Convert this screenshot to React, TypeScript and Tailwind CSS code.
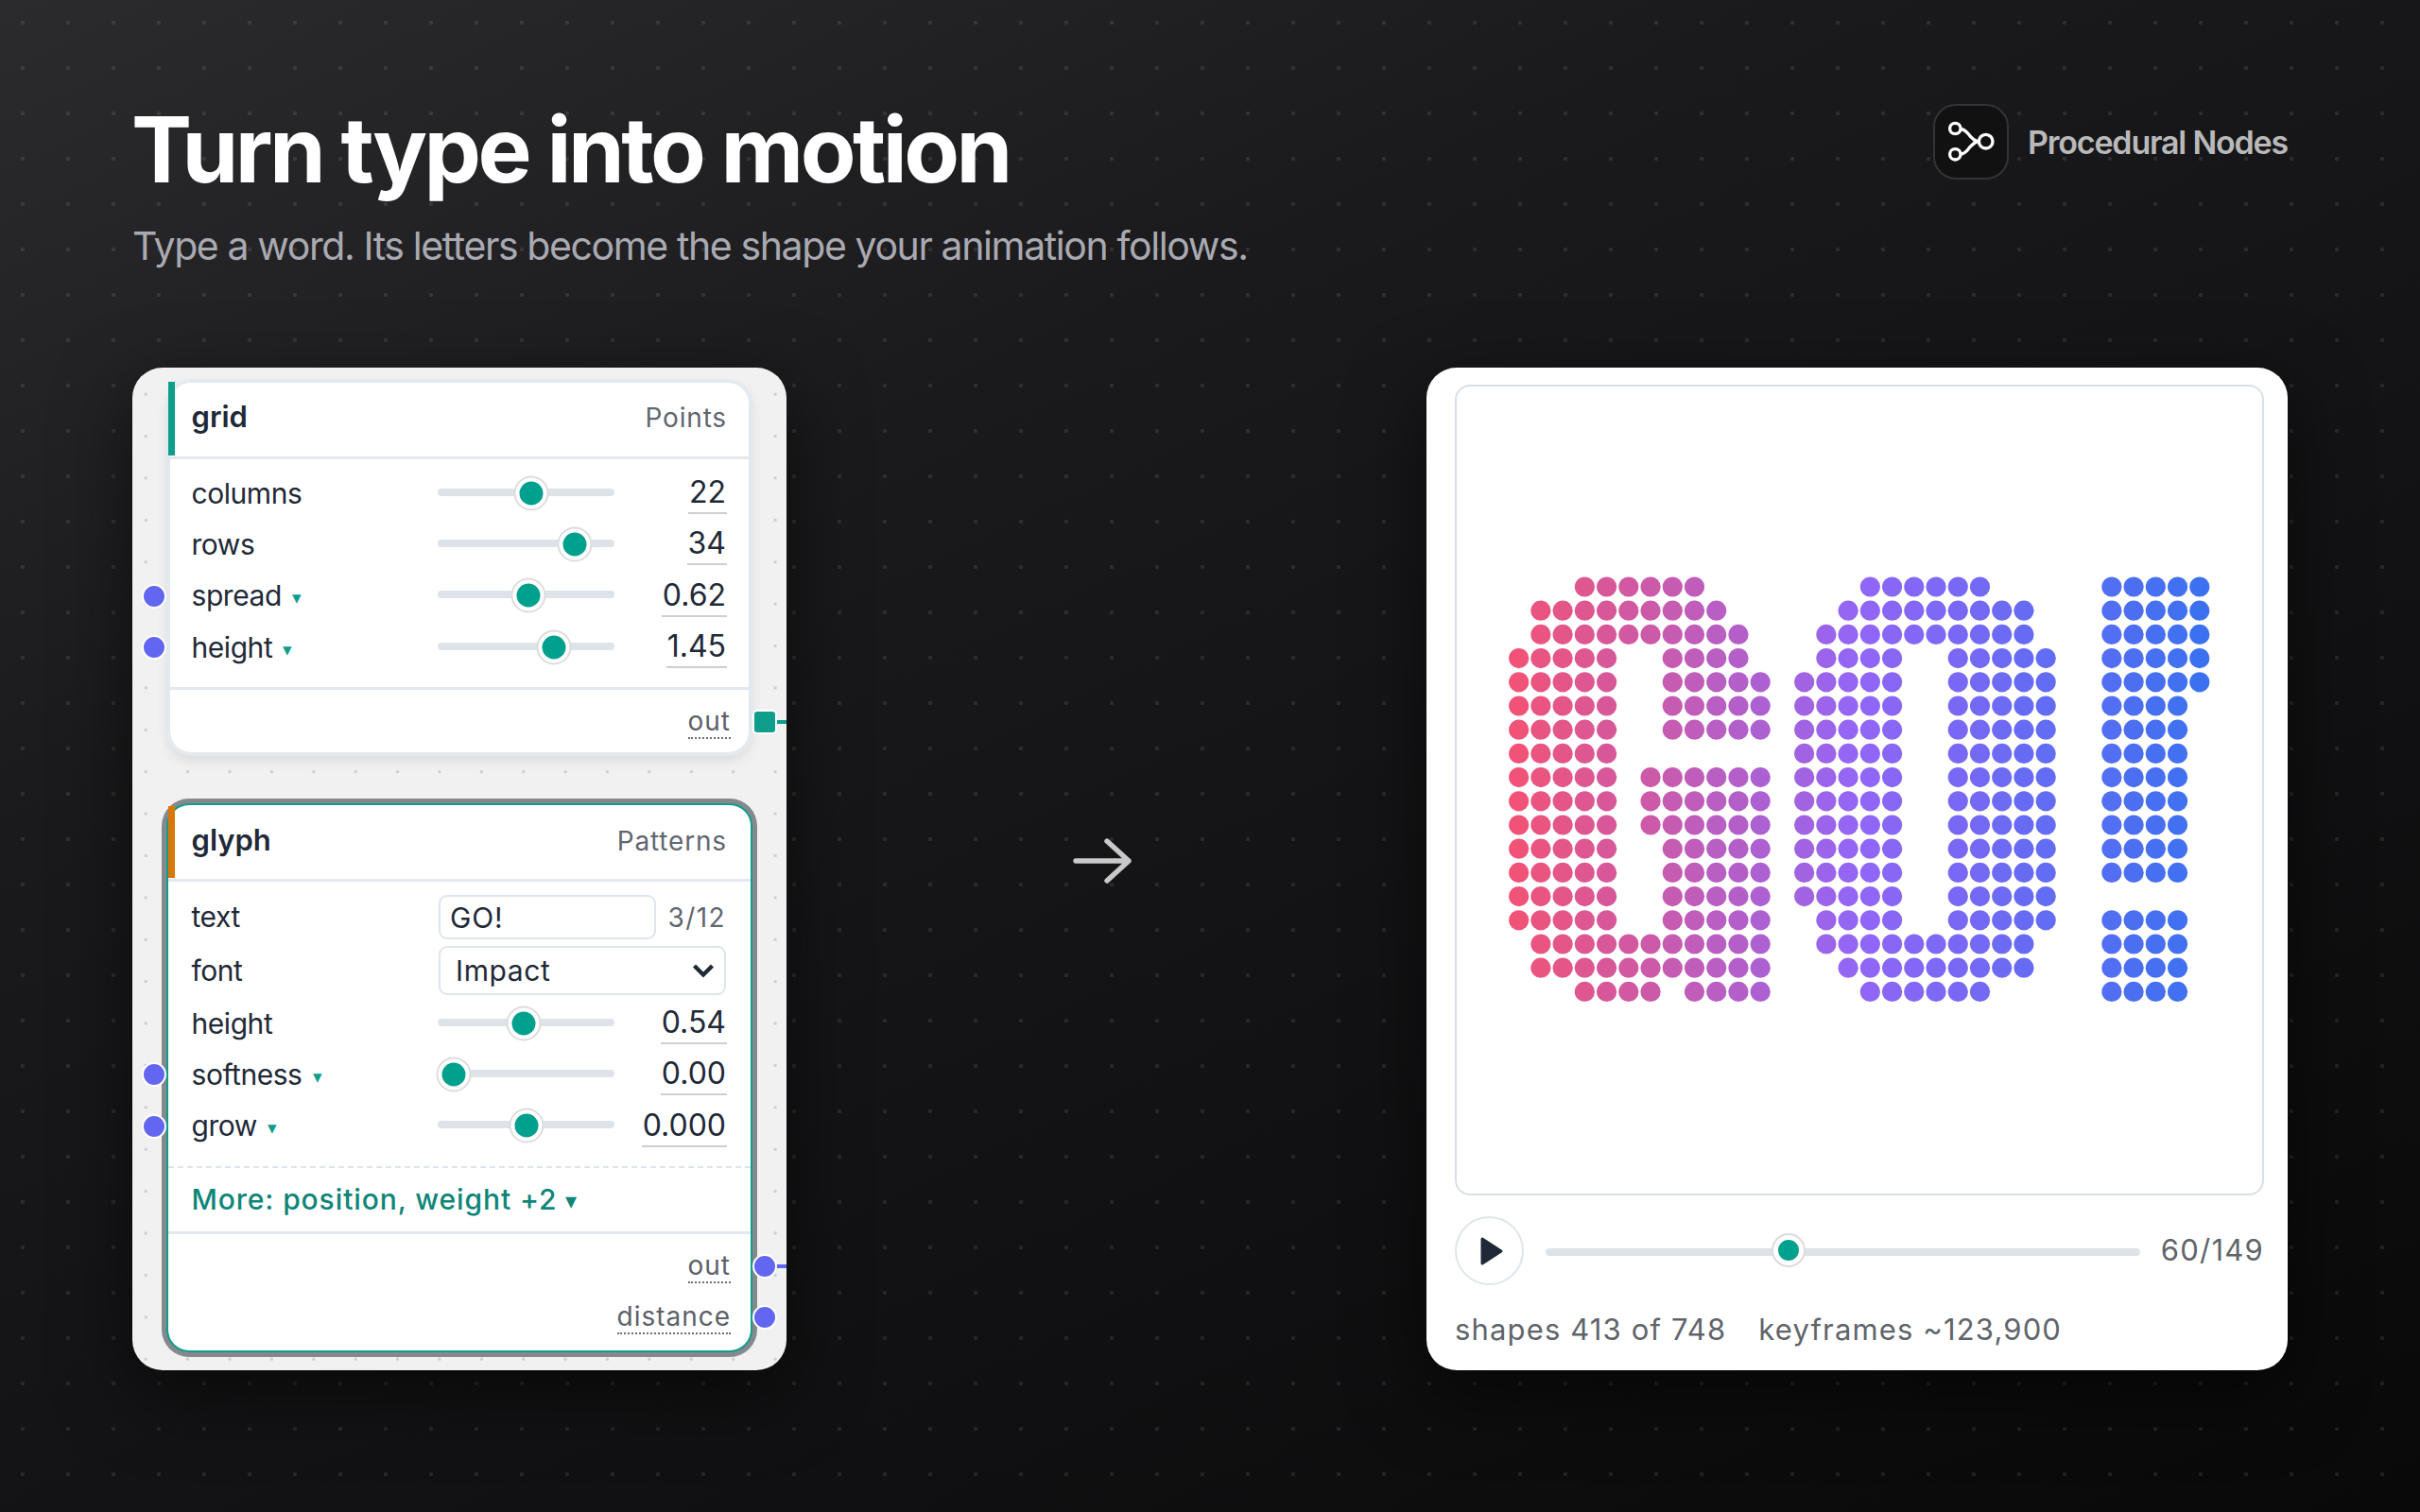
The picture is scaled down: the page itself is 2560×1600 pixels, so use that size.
const gridPorts = [
  { label: "columns", pos: 98.6, value: "22" },
  { label: "rows", pos: 145.4, value: "34" },
  { label: "spread", pos: 96, value: "0.62", port: true },
  { label: "height", pos: 123, value: "1.45", port: true },
];

const glyphPorts = [
  { label: "height", pos: 91, value: "0.54" },
  { label: "softness", pos: 17, value: "0.00", port: true },
  { label: "grow", pos: 94, value: "0.000", port: true },
];

// glyph bitmap: [from, to] column runs per row
const G_O_BANG: number[][][] = [
  [[3, 8], [16, 21], [27, 31]],
  [[1, 9], [15, 23], [27, 31]],
  [[1, 10], [14, 23], [27, 31]],
  [[0, 4], [7, 10], [14, 17], [20, 24], [27, 31]],
  [[0, 4], [7, 11], [13, 17], [20, 24], [27, 31]],
  [[0, 4], [7, 11], [13, 17], [20, 24], [27, 30]],
  [[0, 4], [7, 11], [13, 17], [20, 24], [27, 30]],
  [[0, 4], [13, 17], [20, 24], [27, 30]],
  [[0, 4], [6, 11], [13, 17], [20, 24], [27, 30]],
  [[0, 4], [6, 11], [13, 17], [20, 24], [27, 30]],
  [[0, 4], [6, 11], [13, 17], [20, 24], [27, 30]],
  [[0, 4], [7, 11], [13, 17], [20, 24], [27, 30]],
  [[0, 4], [7, 11], [13, 17], [20, 24], [27, 30]],
  [[0, 4], [7, 11], [13, 17], [20, 24]],
  [[0, 4], [7, 11], [14, 17], [20, 24], [27, 30]],
  [[1, 11], [14, 23], [27, 30]],
  [[1, 11], [15, 23], [27, 30]],
  [[3, 6], [8, 11], [16, 21], [27, 30]],
];

function dotColor(col: number) {
  const t = col / 31;
  const a = [240, 72, 112];
  const b = [139, 92, 246];
  const c = [47, 104, 240];
  const from = t < 0.5 ? a : b;
  const to = t < 0.5 ? b : c;
  const k = t < 0.5 ? t * 2 : (t - 0.5) * 2;
  const mix = from.map((v, i) => Math.round(v + (to[i] - v) * k));
  return `rgb(${mix[0]},${mix[1]},${mix[2]})`;
}

function Thumb({ pos, small }: { pos: number; small?: boolean }) {
  return (
    <div
      className={`absolute top-1/2 -translate-x-1/2 -translate-y-1/2 rounded-full border-white ring-2 ring-[#dcdcdc] bg-[#00a08e] ${small ? "w-[32px] h-[32px] border-[5px] mt-[-2px]" : "w-[33px] h-[33px] border-[4px] mt-[1px]"}`}
      style={{ left: pos }}
    />
  );
}

function Track({ pos }: { pos: number }) {
  return (
    <div className="relative w-[187px] h-[8px] mb-[3px] rounded-full bg-[#dde3e9] shrink-0">
      <Thumb pos={pos} />
    </div>
  );
}

function InPort() {
  return <div className="absolute left-[-28px] top-1/2 -translate-y-1/2 w-[26px] h-[26px] rounded-full bg-[#6366f1] border-2 border-white" />;
}

function OutPort({ square, stub }: { square?: boolean; stub?: boolean }) {
  return (
    <>
      {stub && <div className={`absolute left-[calc(100%+26px)] top-1/2 -translate-y-1/2 w-[20px] h-[4px] ${square ? "bg-[#0f9d8c]" : "bg-[#6366f1]"}`} />}
      <div className={`absolute left-[calc(100%+2px)] top-1/2 -translate-y-1/2 w-[26px] h-[26px] border-2 border-white ${square ? "rounded-[5px] bg-[#0f9d8c]" : "rounded-full bg-[#6366f1]"}`} />
    </>
  );
}

function Caret({ className }: { className: string }) {
  return <span className={`leading-none ${className}`}>▾</span>;
}

function SliderRow({ label, pos, value, port }: { label: string; pos: number; value: string; port?: boolean }) {
  return (
    <div className="relative flex items-center h-[54.33px] pl-[24.5px] pr-[25px]">
      {port && <InPort />}
      <div className="w-[260.5px] flex items-center text-[30px] tracking-[-0.015em] text-[#1f2937]">
        {label}
        {port && <Caret className="ml-[11px] mt-[4px] text-[#0f9d8c] text-[19px]" />}
      </div>
      <Track pos={pos} />
      <div className="flex-1 flex justify-end">
        <span className="h-[44px] px-[1px] pt-[1px] text-[32px] leading-[40px] text-[#1f2937] border-b-2 border-[#cfcfcf]">{value}</span>
      </div>
    </div>
  );
}

function PortLabel({ children }: { children: string }) {
  return <span className="text-[28px] leading-[34px] tracking-[0.035em] text-[#5c6168] border-b-2 border-dotted border-[#6b7076]">{children}</span>;
}

function Header({ title, kind, accent, height }: { title: string; kind: string; accent: string; height: string }) {
  return (
    <div className={`relative flex items-center justify-between pl-[24.5px] pr-[25px] pb-[3px] border-b-[3px] border-[#e2e8ee] ${height}`}>
      <div className={`absolute left-0 top-[1px] bottom-[1px] w-[7px] ${accent}`} />
      <span className="text-[31px] font-semibold text-[#1f2937]">{title}</span>
      <span className="text-[28px] tracking-[0.03em] text-[#5f6670]">{kind}</span>
    </div>
  );
}

function GridNode() {
  return (
    <div className="w-[616px] h-[395px] rounded-[24px] bg-white shadow-[inset_0_0_0_2px_#e2e8ee,0_0_0_2px_#e4e9ee,0_6px_14px_rgba(0,0,0,0.1)]">
      <Header title="grid" kind="Points" accent="bg-[#0f9d8c]" height="h-[83px]" />
      <div className="pt-[9px] pb-[15px]">
        {gridPorts.map((p) => (
          <SliderRow key={p.label} {...p} />
        ))}
      </div>
      <div className="border-t-[3px] border-[#e2e8ee] pt-[16px] pr-[21px]">
        <div className="relative flex justify-end">
          <PortLabel>out</PortLabel>
          <div className="absolute top-0 bottom-0 right-[-21px] w-0">
            <OutPort square stub />
          </div>
        </div>
      </div>
    </div>
  );
}

function GlyphNode() {
  return (
    <div className="mt-[54px] w-[616px] h-[577px] rounded-[22px] bg-white shadow-[0_0_0_2px_#0f9d8c,0_0_0_7px_#85898d]">
      <Header title="glyph" kind="Patterns" accent="bg-[#d97706]" height="h-[81px]" />
      <div className="pl-[24.5px] pr-[26px] pt-[14px]">
        <div className="flex items-center h-[47px]">
          <div className="w-[261.5px] text-[30px] tracking-[-0.015em] text-[#1f2937]">text</div>
          <div className="w-[230px] h-[47px] flex items-center pl-[10px] pt-[2px] rounded-[9px] border-2 border-[#dfe5ec] text-[30px] tracking-[0.03em] text-[#1f2937]">GO!</div>
          <div className="flex-1 text-right text-[28px] tracking-[0.05em] text-[#5f6670]">3/12</div>
        </div>
        <div className="flex items-center h-[52px] mt-[7px]">
          <div className="w-[261.5px] text-[30px] tracking-[-0.015em] text-[#1f2937]">font</div>
          <div className="flex-1 h-[52px] flex items-center justify-between pl-[16px] pr-[10px] rounded-[9px] border-2 border-[#dfe5ec] text-[30px] tracking-[0.02em] text-[#1f2937]">
            Impact
            <svg width="24" height="16" viewBox="0 0 24 16" fill="none" stroke="#1f2937" strokeWidth="4.4">
              <path d="M2.5 3 L12 12.5 L21.5 3" />
            </svg>
          </div>
        </div>
      </div>
      <div className="pt-[3px] pb-[15px]">
        {glyphPorts.map((p) => (
          <SliderRow key={p.label} {...p} />
        ))}
      </div>
      <div className="border-t-2 border-dashed border-[#dfe5ec] h-[69px] flex items-center pl-[24.5px] text-[30px] font-medium tracking-[0.03em] text-[#0f8578]">
        More: position, weight +2
        <Caret className="ml-[9px] mt-[4px] text-[#0f8578] text-[24px]" />
      </div>
      <div className="border-t-[3px] border-[#e2e8ee] pt-[7px] pr-[21px]">
        <div className="relative flex justify-end items-center h-[54px]">
          <PortLabel>out</PortLabel>
          <div className="absolute top-0 bottom-0 right-[-21px] w-0">
            <OutPort stub />
          </div>
        </div>
        <div className="relative flex justify-end items-center h-[54px]">
          <PortLabel>distance</PortLabel>
          <div className="absolute top-0 bottom-0 right-[-21px] w-0">
            <OutPort />
          </div>
        </div>
      </div>
    </div>
  );
}

function DotWord() {
  return (
    <svg className="block" width="852" height="852" viewBox="0 0 852 852">
      {G_O_BANG.flatMap((runs, row) =>
        runs.flatMap(([from, to]) =>
          Array.from({ length: to - from + 1 }, (_, i) => from + i).map((col) => (
            <circle key={`${row}-${col}`} cx={1606.7 - 1541 + col * 23.23} cy={621 - 409 + row * 25.2} r="10.6" fill={dotColor(col)} fillOpacity="0.94" />
          ))
        )
      )}
    </svg>
  );
}

export default function App() {
  return (
    <div className="w-[2560px] h-[1600px] overflow-hidden bg-[linear-gradient(155deg,#2b2b2d_0%,#1a1a1c_32%,#141416_55%,#09090a_100%)] font-[family-name:Inter,sans-serif]">
      <div className="h-full px-[140px] pt-[110px] bg-[radial-gradient(circle,rgba(255,255,255,0.09)_2px,transparent_2.5px)] bg-[size:48px_48px]">
        <div className="flex justify-between items-start">
          <div>
            <h1 className="-ml-[1px] text-[96px] leading-[96px] font-bold tracking-[-0.0365em] text-white">Turn type into motion</h1>
            <p className="mt-[30px] text-[41px] leading-[48px] tracking-[-0.034em] text-[#a9a9b1]">Type a word. Its letters become the shape your animation follows.</p>
          </div>
          <div className="flex items-center gap-[20px]">
            <div className="w-[80px] h-[80px] rounded-[24px] border-2 border-[#333336] bg-[#111112] flex items-center justify-center">
              <svg width="80" height="80" viewBox="0 0 80 80" fill="none" stroke="#fff" strokeWidth="3.3" className="shrink-0">
                <circle cx="23.3" cy="26" r="5.7" />
                <circle cx="23.3" cy="53.3" r="5.7" />
                <circle cx="55.7" cy="39.7" r="7.3" />
                <path d="M29 26.5 C35 27 36 31 39.5 34.5 C43 38 44.5 39.8 48.4 39.8" />
                <path d="M29 53 C35 52.5 36 48.5 39.5 45 C43 41.5 44.5 39.8 48.4 39.8" />
              </svg>
            </div>
            <span className="text-[34px] font-semibold tracking-[-0.035em] text-[#b9b9b9]">Procedural Nodes</span>
          </div>
        </div>

        <div className="flex mt-[105px]">
          <div className="relative overflow-hidden w-[692px] h-[1061px] rounded-[32px] bg-[#f1f1f1] pt-[14px] px-[38px] shadow-[0_24px_80px_rgba(0,0,0,0.55)] bg-[radial-gradient(circle,#cfcfcf_1.5px,transparent_2px)] bg-[size:44.4px_44.4px] bg-[position:-8px_6px]">
            <GridNode />
            <GlyphNode />
          </div>

          <div className="flex-1 flex items-center justify-center pr-[9px] pb-[17px]">
            <svg width="64" height="50" viewBox="0 0 64 50" fill="none" stroke="#c9c9c9" strokeWidth="5.4" strokeLinecap="round" strokeLinejoin="round">
              <path d="M4 25 H60 M37 4 L60 25 L37 46" />
            </svg>
          </div>

          <div className="w-[911px] h-[1061px] rounded-[32px] bg-white pt-[18px] pl-[30px] pr-[25px] shadow-[0_24px_80px_rgba(0,0,0,0.55)]">
            <div className="h-[858px] rounded-[16px] border-2 border-[#d9dee8] bg-white">
              <DotWord />
            </div>
            <div className="flex items-center mt-[22px] h-[73px]">
              <div className="w-[73px] h-[73px] rounded-full border-2 border-[#dfe5ec] flex items-center justify-center shrink-0">
                <svg width="30" height="34" viewBox="0 0 30 34" fill="#1f2937" stroke="#1f2937" strokeWidth="3" strokeLinejoin="round" className="translate-x-[2px]">
                  <path d="M5 4 L25 17 L5 30 Z" />
                </svg>
              </div>
              <div className="relative ml-[23px] w-[629px] h-[8px] mt-[3px] rounded-full bg-[#dde3e9] shrink-0">
                <Thumb pos={256.5} small />
              </div>
              <div className="flex-1 text-right text-[31px] tracking-[0.04em] text-[#5f646b]">60/149</div>
            </div>
            <div className="flex gap-[34px] mt-[27px] text-[31px] leading-[40px] tracking-[0.037em] text-[#5f646b]">
              <span>shapes 413 of 748</span>
              <span>keyframes ~123,900</span>
            </div>
          </div>
        </div>
      </div>
    </div>
  );
}
